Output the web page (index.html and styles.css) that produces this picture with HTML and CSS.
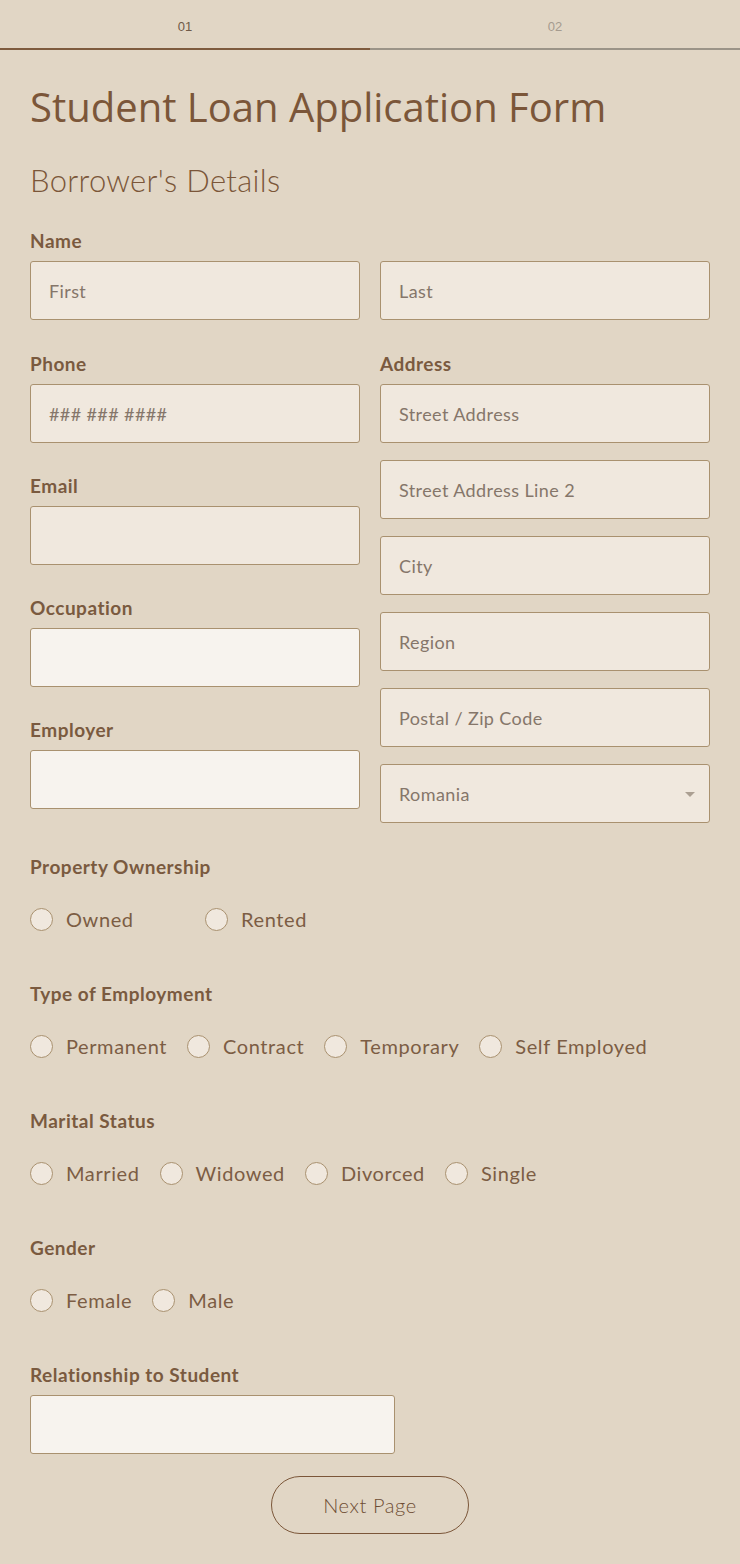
FILE: index.html
```html
<!DOCTYPE html>
<html>
<head>
<meta charset="utf-8">
<link rel="stylesheet" href="styles.css">
</head>
<body>
<div class="tabs">
  <div class="tab active">01</div>
  <div class="tab">02</div>
</div>
<main class="form">
  <h1 class="title">Student Loan Application Form</h1>
  <h2 class="subtitle">Borrower's Details</h2>

  <div class="field first">
    <div class="label">Name</div>
    <div class="row2">
      <div class="input">First</div>
      <div class="input">Last</div>
    </div>
  </div>

  <div class="cols">
    <div class="col">
      <div class="field">
        <div class="label">Phone</div>
        <div class="input">### ### ####</div>
      </div>
      <div class="field">
        <div class="label">Email</div>
        <div class="input"></div>
      </div>
      <div class="field">
        <div class="label">Occupation</div>
        <div class="input light"></div>
      </div>
      <div class="field">
        <div class="label">Employer</div>
        <div class="input light"></div>
      </div>
    </div>
    <div class="col right">
      <div class="label">Address</div>
      <div class="stack">
        <div class="input">Street Address</div>
        <div class="input">Street Address Line 2</div>
        <div class="input">City</div>
        <div class="input">Region</div>
        <div class="input">Postal / Zip Code</div>
        <div class="input select">Romania<span class="caret"></span></div>
      </div>
    </div>
  </div>

  <section class="group">
    <div class="label">Property Ownership</div>
    <div class="radios fixed">
      <label class="radio"><span class="circle"></span>Owned</label>
      <label class="radio"><span class="circle"></span>Rented</label>
    </div>
  </section>

  <section class="group">
    <div class="label">Type of Employment</div>
    <div class="radios">
      <label class="radio"><span class="circle"></span>Permanent</label>
      <label class="radio"><span class="circle"></span>Contract</label>
      <label class="radio"><span class="circle"></span>Temporary</label>
      <label class="radio"><span class="circle"></span>Self Employed</label>
    </div>
  </section>

  <section class="group">
    <div class="label">Marital Status</div>
    <div class="radios">
      <label class="radio"><span class="circle"></span>Married</label>
      <label class="radio"><span class="circle"></span>Widowed</label>
      <label class="radio"><span class="circle"></span>Divorced</label>
      <label class="radio"><span class="circle"></span>Single</label>
    </div>
  </section>

  <section class="group">
    <div class="label">Gender</div>
    <div class="radios">
      <label class="radio"><span class="circle"></span>Female</label>
      <label class="radio"><span class="circle"></span>Male</label>
    </div>
  </section>

  <section class="group last">
    <div class="label">Relationship to Student</div>
    <div class="input light half"></div>
  </section>

  <div class="actions">
    <button class="next">Next Page</button>
  </div>
</main>
</body>
</html>
```

FILE: styles.css
```css
* { box-sizing: border-box; }
html, body {
  margin: 0;
  padding: 0;
  background: #e1d6c5;
}
body {
  font-family: "Lato", "Noto Sans", sans-serif;
  color: #74512f;
  width: 740px;
  height: 1564px;
  overflow: hidden;
}
.tabs {
  display: flex;
  height: 50px;
}
.tab {
  flex: 1;
  text-align: center;
  font-family: "Liberation Sans", Arial, sans-serif;
  font-size: 13px;
  color: #a59b8f;
  padding-top: 19px;
  border-bottom: 2px solid #9b9488;
}
.tab.active {
  color: #6f5a48;
  border-bottom-color: #7e5b3e;
}
.form {
  padding: 0 30px;
}
.title {
  margin: 31px 0 0;
  font-family: "Open Sans", sans-serif;
  font-weight: 400;
  font-size: 40px;
  line-height: 52px;
  color: #7b5639;
}
.subtitle {
  margin: 27px 0 0;
  font-weight: 300;
  font-size: 31px;
  line-height: 40px;
  color: #7b5639;
  letter-spacing: 0.3px;
}
.label {
  font-size: 19px;
  font-weight: 700;
  line-height: 24px;
  color: #7a5a3f;
  letter-spacing: 0.5px;
  margin-bottom: 8px;
}
.field {
  margin-top: 31px;
}
.field.first { margin-top: 29px; }
.cols .col:first-child .field:first-child { margin-top: 32px; }
.row2, .cols {
  display: flex;
  gap: 20px;
}
.row2 > .input { flex: 1; }
.col { flex: 1; display: flex; flex-direction: column; }
.col.right { padding-top: 32px; }
.stack { display: flex; flex-direction: column; gap: 17px; }
.input {
  height: 59px;
  background: #f0e8de;
  border: 1px solid #a9916f;
  border-radius: 3px;
  padding: 0 18px;
  display: flex;
  align-items: center;
  font-size: 18px;
  letter-spacing: 0.4px;
  color: #85766a;
}
.input.light { background: #f7f3ee; }
.input.half { width: 365px; }
.select { position: relative; }
.caret {
  position: absolute;
  right: 14px;
  top: 27px;
  width: 0;
  height: 0;
  border-left: 5px solid transparent;
  border-right: 5px solid transparent;
  border-top: 5px solid #ab9f92;
}
.group { margin-top: 32px; }
.group + .group { margin-top: 51px; }
.group .label { margin-bottom: 0; }
.radios {
  display: flex;
  gap: 20px;
  margin-top: 28px;
}
.radios.fixed { gap: 0; }
.radios.fixed .radio { width: 175px; }
.radio {
  display: flex;
  align-items: center;
  gap: 13px;
  font-size: 20px;
  line-height: 24px;
  letter-spacing: 0.6px;
  color: #7c5d44;
}
.circle {
  width: 23px;
  height: 23px;
  border-radius: 50%;
  border: 1px solid #a9916f;
  background: #f0e8de;
  flex: none;
}
.group.last .label { margin-bottom: 8px; }
.actions {
  display: flex;
  justify-content: center;
  margin-top: 22px;
}
.next {
  width: 198px;
  height: 58px;
  border-radius: 29px;
  border: 1px solid #7b5639;
  background: transparent;
  font-family: "Lato", sans-serif;
  font-weight: 300;
  font-size: 20px;
  letter-spacing: 0.6px;
  color: #6e4d33;
}
```
